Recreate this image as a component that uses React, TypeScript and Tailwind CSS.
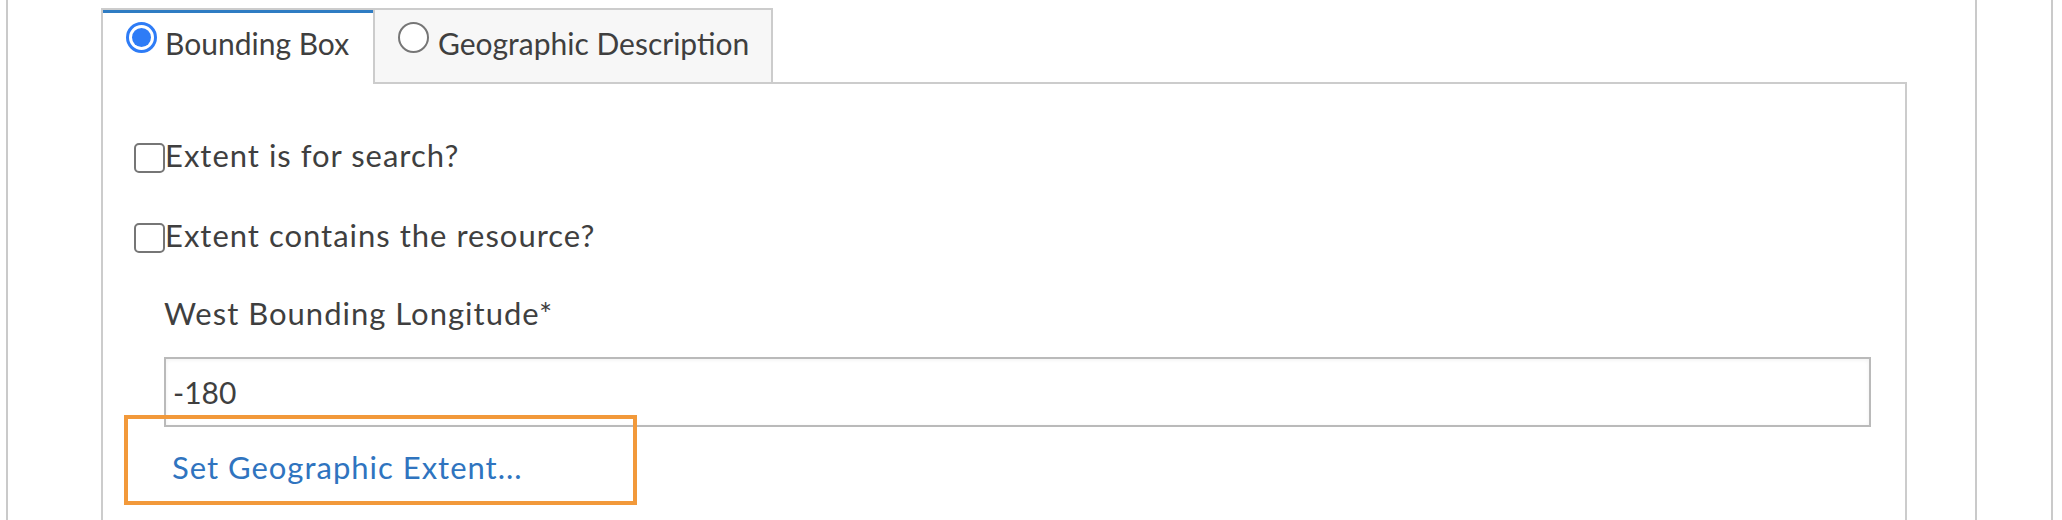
import React from 'react';

function Radio({ checked }: { checked: boolean }) {
    if (checked) {
        return (
            <span className="flex h-[31px] w-[31px] shrink-0 rounded-full border-[3px] border-[#2e7cf6] bg-white p-[3px]">
                <span className="h-full w-full rounded-full bg-[#2e7cf6]" />
            </span>
        );
    }
    return <span className="block h-[31px] w-[31px] shrink-0 rounded-full border-2 border-[#767676] bg-white" />;
}

function Checkbox({ label, className = '' }: { label: string; className?: string }) {
    return (
        <label className={`ml-[31px] flex items-start leading-[36px] ${className}`}>
            <span className="mt-[6px] block h-[30px] w-[31px] shrink-0 rounded-[5px] border-2 border-[#767676] bg-white" />
            <span className="text-[31px] tracking-[1px]">{label}</span>
        </label>
    );
}

function TabBar() {
    return (
        <div className="flex h-[76px] shrink-0">
            <div className="flex w-[272px] items-start border-l-2 border-t-2 border-[#cccccc] bg-white pl-[23px] pt-[12px] shadow-[inset_0_3px_0_#2f7cc3]">
                <Radio checked />
                <span className="ml-[8px] mt-[3px] leading-[36px]">Bounding Box</span>
            </div>
            <div className="flex w-[400px] items-start border-2 border-[#cccccc] bg-[#f7f7f7] pl-[23px] pt-[12px]">
                <Radio checked={false} />
                <span className="ml-[9px] mt-[3px] leading-[36px]">Geographic Description</span>
            </div>
            <div className="flex-1 border-b-2 border-[#cccccc]" />
        </div>
    );
}

function Panel() {
    return (
        <div className="relative flex flex-1 flex-col items-start border-x-2 border-[#cccccc] bg-white pt-[53px]">
            <Checkbox label="Extent is for search?" />
            <Checkbox label="Extent contains the resource?" className="mt-[44px]" />

            <div className="ml-[61px] mt-[42px] text-[31px] leading-[36px] tracking-[1px]">West Bounding Longitude*</div>
            <div className="ml-[61px] mt-[26px] flex h-[70px] w-[1707px] items-center border-2 border-[#bababa] px-[7px] leading-[36px] shadow-[inset_0_1px_4px_rgba(0,0,0,0.06)]">
                -180
            </div>
            <a className="ml-[69px] mt-[22px] text-[31px] leading-[36px] tracking-[1px] text-[#2f74bf]">Set Geographic Extent...</a>

            {/* highlight annotation over the link */}
            <div className="absolute left-[21px] top-[331px] h-[90px] w-[513px] border-4 border-[#f2993a]" />
        </div>
    );
}

export default function App() {
    return (
        <div className="flex h-[520px] w-[2062px] overflow-hidden bg-white font-['Lato',sans-serif] text-[30px] text-[#3f3f3f]">
            <div className="ml-[6px] flex w-[2047px] border-x-2 border-[#cacaca]">
                <div className="flex flex-1 flex-col border-r-2 border-[#cacaca] pl-[93px] pr-[68px] pt-[8px]">
                    <TabBar />
                    <Panel />
                </div>
                <div className="w-[74px]" />
            </div>
        </div>
    );
}
